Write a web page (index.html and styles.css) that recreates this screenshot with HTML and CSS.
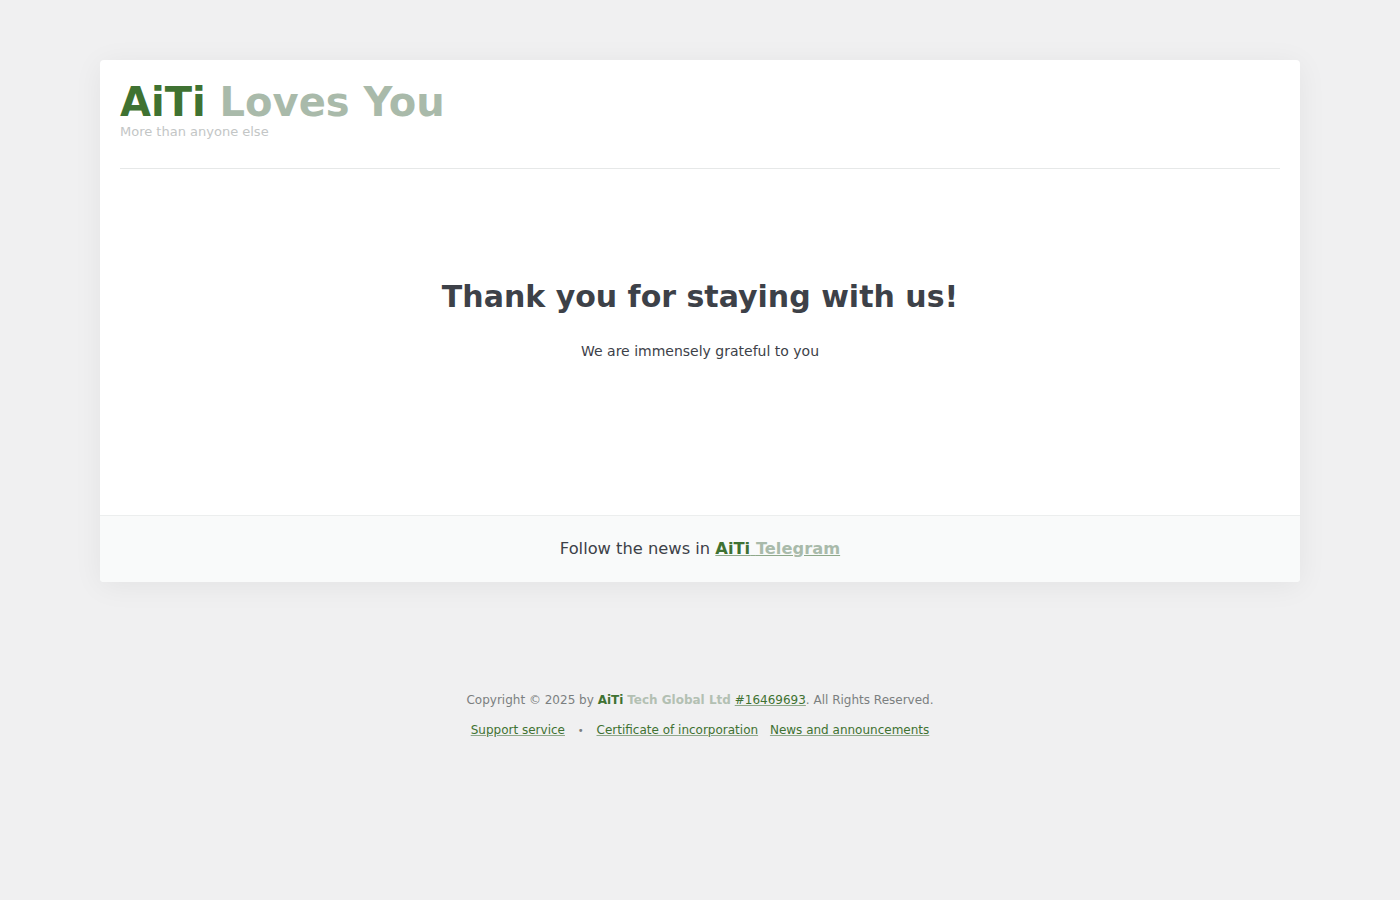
FILE: index.html
```html
<!DOCTYPE html>
<html lang="en">
<head>
  <meta charset="UTF-8">
  <meta name="viewport" content="width=device-width, initial-scale=1.0">
  <title>AiTi Loves You</title>
  <link rel="stylesheet" href="styles.css">
</head>
<body>
  <div class="card">
    <div class="header">
      <h1 class="logo"><span class="brand">AiTi</span> <span class="brand-soft">Loves You</span></h1>
      <div class="tagline">More than anyone else</div>
    </div>

    <div class="content">
      <h2>Thank you for staying with us!</h2>
      <p>We are immensely grateful to you</p>
    </div>

    <div class="card-footer">
      Follow the news in <a href="#" class="tg"><span class="brand">AiTi</span> <span class="brand-soft">Telegram</span></a>
    </div>
  </div>

  <footer class="site-footer">
    <div class="copy">Copyright &copy; 2025 by <b class="brand">AiTi</b> <b class="brand-soft">Tech Global Ltd</b> <a href="#">#16469693</a>. All Rights Reserved.</div>
    <div class="links">
      <a href="#">Support service</a>
      <span class="dot">&bull;</span>
      <a href="#">Certificate of incorporation</a>
      <a href="#">News and announcements</a>
    </div>
  </footer>
</body>
</html>
```

FILE: styles.css
```css
/* Page */
body {
margin: 0;
background: #f0f0f1;
font-family: "DejaVu Sans", Verdana, sans-serif;
color: #3d4148;
padding-top: 60px;
}

/* Main card */
.card {
width: 1200px;
margin: 0 auto;
background: #fff;
border-radius: 4px;
box-shadow: 0 4px 30px rgba(0, 0, 0, 0.06);
overflow: hidden;
}

.brand {
color: #3f7232;
}

.brand-soft {
color: #a9baaa;
}

/* Header with logo */
.header {
margin: 0 20px;
padding: 20px 0 29px;
border-bottom: 1px solid #e6e8e8;
}

.logo {
margin: 0;
font-size: 40px;
line-height: 44px;
font-weight: bold;
}

.tagline {
margin-top: 0;
font-size: 13px;
color: #c3c6c6;
}

/* Thank you block */
.content {
height: 346px;
text-align: center;
}

.content h2 {
margin: 0;
padding-top: 110px;
font-size: 30px;
line-height: 36px;
font-weight: bold;
color: #3d4148;
}

.content p {
margin: 28px 0 0;
font-size: 14px;
color: #3d4148;
}

/* Telegram strip */
.card-footer {
background: #f9fafa;
border-top: 1px solid #eceeee;
height: 66px;
line-height: 66px;
text-align: center;
font-size: 16.3px;
color: #3d4148;
}

.tg {
font-weight: bold;
text-decoration: underline;
text-decoration-color: #8ea88a;
}

/* Bottom footer */
.site-footer {
margin-top: 111px;
text-align: center;
font-size: 12px;
color: #7b7f80;
}

.site-footer .brand-soft {
color: #b3c0b3;
}

.site-footer a {
color: #3f7232;
text-decoration: underline;
text-decoration-color: #8ea88a;
}

.links {
margin-top: 16px;
}

.links a {
margin: 0 4px;
}

.dot {
margin: 0 5px;
font-size: 10px;
}
```
